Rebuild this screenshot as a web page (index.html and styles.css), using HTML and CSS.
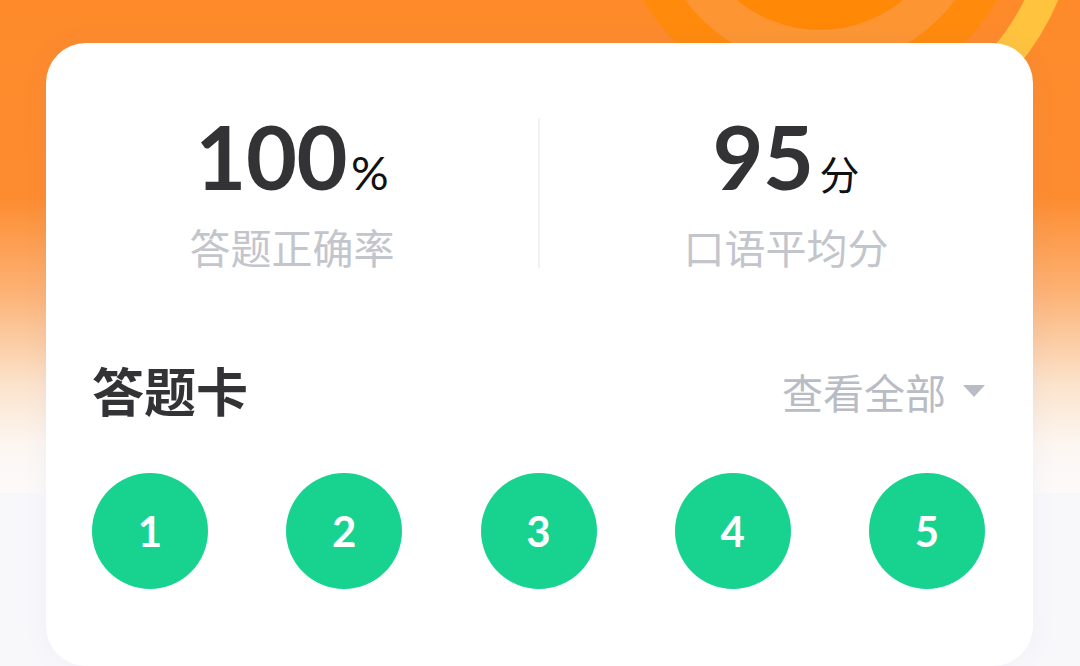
FILE: index.html
```html
<!DOCTYPE html>
<html lang="zh">
<head>
<meta charset="utf-8">
<link rel="stylesheet" href="styles.css">
</head>
<body>
<div class="page">
  <div class="hero-bg">
    <svg class="decor" width="1080" height="493" viewBox="0 0 1080 493" xmlns="http://www.w3.org/2000/svg">
      <circle cx="820" cy="-100" r="203" fill="#ff8a0c"/>
      <circle cx="820" cy="-100" r="168" fill="#fd9632"/>
      <circle cx="820" cy="-100" r="130" fill="#ff8806"/>
      <path d="M 1048.3 -183.1 A 243 243 0 0 1 941.5 110.4" fill="none" stroke="#ffc33e" stroke-width="31"/>
    </svg>
  </div>
  <main class="card">
    <section class="stats">
      <div class="stat">
        <div class="stat-value"><span class="num">100</span><span class="unit pct">%</span></div>
        <div class="stat-label">答题正确率</div>
      </div>
      <div class="divider"></div>
      <div class="stat">
        <div class="stat-value"><span class="num">95</span><span class="unit fen">分</span></div>
        <div class="stat-label">口语平均分</div>
      </div>
    </section>
    <section class="answers">
      <div class="answers-head">
        <h2 class="answers-title">答题卡</h2>
        <div class="view-all">查看全部<span class="caret"></span></div>
      </div>
      <div class="bubbles">
        <span class="bubble">1</span>
        <span class="bubble">2</span>
        <span class="bubble">3</span>
        <span class="bubble">4</span>
        <span class="bubble">5</span>
      </div>
    </section>
  </main>
</div>
</body>
</html>
```

FILE: styles.css
```css
* { box-sizing: border-box; }
html, body {
  margin: 0;
  padding: 0;
  width: 1080px;
  height: 666px;
  overflow: hidden;
  background: #f8f8fb;
  font-family: "Noto Sans CJK SC", "Noto Sans", sans-serif;
}
.page {
  position: relative;
  width: 1080px;
  height: 666px;
  padding-top: 43px;
}
.hero-bg {
  position: absolute;
  left: 0;
  top: 0;
  width: 1080px;
  height: 493px;
  background: linear-gradient(180deg, #fe8a2a 0%, #fd8c30 40%, #fcb478 60%, #fbe3cc 78%, #fcf6f1 90%, #fcfafa 100%);
  overflow: hidden;
  z-index: 0;
}
.decor {
  position: absolute;
  left: 0;
  top: 0;
  -webkit-mask-image: linear-gradient(180deg, #000 0%, #000 40%, transparent 65%);
  mask-image: linear-gradient(180deg, #000 0%, #000 40%, transparent 65%);
}
.card {
  position: relative;
  z-index: 1;
  margin-left: 46px;
  width: 987px;
  height: 623px;
  background: #fff;
  border-radius: 40px;
  box-shadow: 0 0 24px rgba(120, 120, 200, 0.07);
  padding: 75px 48px 0 47px;
}
.stats {
  display: flex;
  align-items: stretch;
  margin: 0 -47px 0 -47px;
}
.stat {
  flex: 1;
  display: flex;
  flex-direction: column;
  align-items: center;
}
.divider {
  width: 2px;
  background: #eff1f6;
}
.stat-value {
  display: flex;
  align-items: baseline;
  line-height: 88px;
  height: 88px;
  margin-top: -6px;
}
.num {
  font-family: Lato, "Noto Sans", sans-serif;
  font-weight: 700;
  font-size: 88px;
  color: #333335;
  letter-spacing: -0.5px;
}
.unit {
  color: #111;
  margin-left: 4px;
}
.pct {
  font-family: Lato, sans-serif;
  font-weight: 400;
  font-size: 47px;
}
.fen {
  font-size: 40px;
  margin-left: 6px;
}
.stat-label {
  margin-top: 24px;
  font-size: 41px;
  line-height: 44px;
  color: #c3c5cc;
}
.answers {
  margin-top: 95px;
}
.answers-head {
  display: flex;
  justify-content: space-between;
  align-items: center;
  height: 56px;
}
.answers-title {
  margin: 0;
  font-size: 52px;
  font-weight: 700;
  color: #333335;
  line-height: 56px;
  margin-left: -1px;
  margin-top: -3px;
}
.view-all {
  display: flex;
  align-items: center;
  font-size: 41px;
  color: #b9bcc4;
  line-height: 56px;
}
.caret {
  width: 0;
  height: 0;
  margin-left: 17px;
  border-left: 11px solid transparent;
  border-right: 11px solid transparent;
  border-top: 12px solid #b9bcc4;
}
.bubbles {
  display: flex;
  justify-content: space-between;
  margin-top: 54px;
  margin-left: -1px;
}
.bubble {
  width: 116px;
  height: 116px;
  border-radius: 50%;
  background: #17d38f;
  color: #fff;
  display: flex;
  align-items: center;
  justify-content: center;
  font-family: Lato, "Noto Sans", sans-serif;
  font-weight: 700;
  font-size: 42px;
}
```
